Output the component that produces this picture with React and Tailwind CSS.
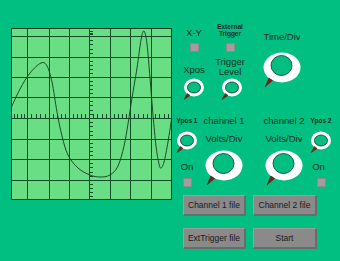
const hLines = [36, 57, 77, 97, 118, 139, 159, 180];
const vLines = [27, 49, 69, 89, 110, 130, 151];

const wave = [
  [11, 108], [20, 89], [30, 73], [41, 63], [47, 66], [52, 82], [57, 112], [62, 136],
  [68, 155], [78, 168], [90, 175], [100, 177], [110, 175], [118, 166], [124, 146],
  [128, 124], [132, 98], [137, 68], [141, 40], [144, 31], [147, 44], [150, 78],
  [153, 115], [156, 146], [159, 164], [161, 168], [164, 162], [168, 142], [172, 116]
];

function smooth(pts) {
  let d = `M${pts[0][0]} ${pts[0][1]}`;
  for (let i = 0; i < pts.length - 1; i++) {
    const p0 = pts[i - 1] || pts[i];
    const p1 = pts[i];
    const p2 = pts[i + 1];
    const p3 = pts[i + 2] || p2;
    const c1 = [p1[0] + (p2[0] - p0[0]) / 6, p1[1] + (p2[1] - p0[1]) / 6];
    const c2 = [p2[0] - (p3[0] - p1[0]) / 6, p2[1] - (p3[1] - p1[1]) / 6];
    d += ` C${c1[0]} ${c1[1]} ${c2[0]} ${c2[1]} ${p2[0]} ${p2[1]}`;
  }
  return d;
}

function Scope() {
  const rows = [28, ...hLines, 200];
  const cols = [11, ...vLines, 172];
  const yTicks = [];
  for (let i = 0; i < rows.length - 1; i++) {
    for (let k = 1; k < 5; k++) {
      const y = rows[i] + ((rows[i + 1] - rows[i]) * k) / 5;
      if (y > 30) yTicks.push(y);
    }
  }
  const xTicks = [];
  for (let i = 0; i < cols.length - 1; i++) {
    for (let k = 1; k < 5; k++) xTicks.push(cols[i] + ((cols[i + 1] - cols[i]) * k) / 5);
  }
  return (
    <svg width="161" height="172" viewBox="11 28 161 172" className="block">
      <rect x="11" y="28" width="161" height="172" fill="#6ade84" />
      {hLines.map((y) => (
        <line key={y} x1="11" x2="172" y1={y + 0.5} y2={y + 0.5} stroke="#134d28" strokeWidth="1" />
      ))}
      {vLines.map((x) => (
        <line key={x} y1="28" y2="200" x1={x + 0.5} x2={x + 0.5} stroke="#134d28" strokeWidth="1" />
      ))}
      {yTicks.map((y, i) => (
        <line key={i} x1="89" x2="93" y1={Math.round(y) + 0.5} y2={Math.round(y) + 0.5} stroke="#134d28" />
      ))}
      {xTicks.map((x, i) => (
        <line key={i} y1="114" y2="118" x1={Math.round(x) + 0.5} x2={Math.round(x) + 0.5} stroke="#134d28" />
      ))}
      <path d={smooth(wave)} fill="none" stroke="#143a20" strokeWidth="0.9" />
      <rect x="11.5" y="28.5" width="160" height="171" fill="none" stroke="#0e3d1e" />
    </svg>
  );
}

function SmallKnob() {
  return (
    <svg width="22" height="23" viewBox="0 0 22 23" className="block">
      <ellipse cx="11" cy="9.5" rx="10" ry="9" fill="#fff" />
      <ellipse cx="11" cy="9.5" rx="6.5" ry="5.5" fill="#00bf80" stroke="#123424" strokeWidth="0.8" />
      <polygon points="4.5,15.5 7,17.5 1,21.5" fill="#8a1c12" stroke="#3a1a10" strokeWidth="0.5" />
    </svg>
  );
}

function BigKnob() {
  return (
    <svg width="40" height="37" viewBox="0 0 40 37" className="block">
      <ellipse cx="20" cy="15.5" rx="18.5" ry="15" fill="#fff" />
      <ellipse cx="19.5" cy="13.5" rx="10.5" ry="10" fill="#00bf80" stroke="#123424" strokeWidth="0.8" />
      <polygon points="7,26 10.5,28.5 3,35" fill="#8a1c12" stroke="#3a1a10" strokeWidth="0.5" />
    </svg>
  );
}

function Box() {
  return <div className="w-[9px] h-[9px] bg-[#a59d9d] border border-[#8f8a8a]" />;
}

function Btn({ children }) {
  return (
    <button className="h-[21px] bg-[#8a8a8a] border-t border-l border-t-[#9e9e9e] border-l-[#9e9e9e] border-b-2 border-r-2 border-b-[#6b6b6b] border-r-[#6b6b6b] text-[8.5px] text-[#1a1a1a] leading-none">
      {children}
    </button>
  );
}

export default function App() {
  return (
    <div className="w-[340px] h-[261px] bg-[#00bf80] flex overflow-hidden font-['Liberation_Sans',Arial,sans-serif] text-[#11301f]">
      <div className="w-[172px] shrink-0 pl-[11px] pt-[28px]">
        <Scope />
      </div>

      <div className="flex-1 flex flex-col pt-[23px]">
        {/* top controls */}
        <div className="h-[93px] flex">
          <div className="ml-[8px] w-[28px] flex flex-col items-center">
            <span className="mt-[5px] text-[9.5px] leading-[10px]">X-Y</span>
            <div className="mt-[5px]"><Box /></div>
            <span className="mt-[13px] text-[9.5px] leading-[10px]">Xpos</span>
            <div className="mt-[3px]"><SmallKnob /></div>
          </div>
          <div className="ml-[4px] w-[36px] flex flex-col items-center">
            <span className="text-[6.5px] font-bold leading-[7px] text-center">External<br />Trigger</span>
            <div className="mt-[6px]"><Box /></div>
            <span className="mt-[5px] text-[9.5px] leading-[10px] text-center">Trigger<br />Level</span>
            <div className="mt-[1px] ml-[3px]"><SmallKnob /></div>
          </div>
          <div className="ml-[12px] w-[44px] flex flex-col items-center">
            <span className="mt-[9px] text-[9.5px] leading-[10px]">Time/Div</span>
            <div className="mt-[10px]"><BigKnob /></div>
          </div>
        </div>

        {/* channel controls */}
        <div className="h-[79px] flex">
          <div className="ml-[4px] w-[22px] flex flex-col items-center">
            <span className="text-[6.5px] font-bold leading-[10px] whitespace-nowrap">Ypos 1</span>
            <div className="mt-[5px]"><SmallKnob /></div>
            <span className="mt-[8px] text-[9.5px] leading-[10px]">On</span>
            <div className="mt-[6px]"><Box /></div>
          </div>
          <div className="ml-[4px] w-[44px] flex flex-col items-center">
            <span className="text-[9.5px] leading-[10px] whitespace-nowrap">channel 1</span>
            <span className="mt-[8px] text-[9.5px] leading-[10px]">Volts/Div</span>
            <div className="mt-[6px]"><BigKnob /></div>
          </div>
          <div className="ml-[16px] w-[44px] flex flex-col items-center">
            <span className="text-[9.5px] leading-[10px] whitespace-nowrap">channel 2</span>
            <span className="mt-[8px] text-[9.5px] leading-[10px]">Volts/Div</span>
            <div className="mt-[6px]"><BigKnob /></div>
          </div>
          <div className="ml-[3px] w-[24px] flex flex-col items-center">
            <span className="text-[6.5px] font-bold leading-[10px] whitespace-nowrap">Ypos 2</span>
            <div className="mt-[5px]"><SmallKnob /></div>
            <span className="mt-[8px] -ml-[5px] text-[9.5px] leading-[10px]">On</span>
            <div className="mt-[6px]"><Box /></div>
          </div>
        </div>

        {/* file buttons */}
        <div className="ml-[11px] grid grid-cols-[63px_64px] gap-x-[7px] gap-y-[12px]">
          <Btn>Channel 1 file</Btn>
          <Btn>Channel 2 file</Btn>
          <Btn>ExtTrigger file</Btn>
          <Btn>Start</Btn>
        </div>
      </div>
    </div>
  );
}
